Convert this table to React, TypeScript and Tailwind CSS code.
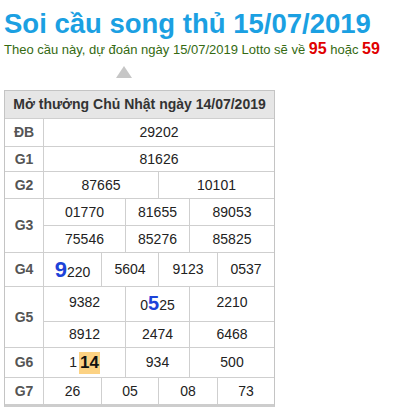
import React from "react";

const F = { fontFamily: '"Liberation Sans", Arial, sans-serif' };

function Label({ children, h }: { children: React.ReactNode; h: string }) {
  return (
    <div className={`w-[39px] shrink-0 border-r border-[#cfcfcf] flex items-center justify-center font-bold text-[14px] text-[#555] ${h}`}>
      {children}
    </div>
  );
}

function Cells({ cols, vals, h, top }: { cols: string; vals: React.ReactNode[]; h: string; top?: boolean }) {
  return (
    <div className={`grid ${cols} ${h} ${top ? "border-t border-[#cfcfcf]" : ""}`}>
      {vals.map((v, i) => (
        <div
          key={i}
          className={`flex items-center justify-center text-[14px] text-[#222] ${i > 0 ? "border-l border-[#cfcfcf]" : ""}`}
        >
          {v}
        </div>
      ))}
    </div>
  );
}

const C1 = "grid-cols-[1fr]";
const C2 = "grid-cols-[114px_1fr]";
const C3 = "grid-cols-[81px_64px_1fr]";
const C4 = "grid-cols-[57px_57px_59px_1fr]";

export default function App() {
  return (
    <div className="w-[400px] h-[408px] bg-white overflow-hidden" style={F}>
      <div className="pl-[4px] pt-[7px]">
        <h1 className="text-[27.5px] leading-[34px] font-bold text-[#1ba0e2]">Soi cầu song thủ 15/07/2019</h1>
        <p className="text-[13px] leading-[18px] text-[#356a12] mt-[0px]">
          Theo cầu này, dự đoán ngày 15/07/2019 Lotto sẽ về{" "}
          <span className="text-[16px] leading-none font-bold text-[#e00000]">95</span> hoặc{" "}
          <span className="text-[16px] leading-none font-bold text-[#e00000]">59</span>
        </p>
        <div className="ml-[112px] mt-[7px] w-0 h-0 border-l-[8px] border-r-[8px] border-b-[12px] border-l-transparent border-r-transparent border-b-[#c6c6c6]" />
        <div className="mt-[12px] w-[271px] border border-[#c4c4c4] border-b-[3px] border-b-[#cdcdcd]">
          <div className="h-[27px] bg-[#e6e6e6] flex items-center justify-center font-bold text-[14px] text-[#333]">
            Mở thưởng Chủ Nhật ngày 14/07/2019
          </div>
          <div className="flex border-t border-[#cfcfcf]">
            <Label h="h-[27px]">ĐB</Label>
            <div className="flex-1"><Cells cols={C1} vals={["29202"]} h="h-[27px]" /></div>
          </div>
          <div className="flex border-t border-[#cfcfcf]">
            <Label h="h-[24px]">G1</Label>
            <div className="flex-1"><Cells cols={C1} vals={["81626"]} h="h-[24px]" /></div>
          </div>
          <div className="flex border-t border-[#cfcfcf]">
            <Label h="h-[26px]">G2</Label>
            <div className="flex-1"><Cells cols={C2} vals={["87665", "10101"]} h="h-[26px]" /></div>
          </div>
          <div className="flex border-t border-[#cfcfcf]">
            <Label h="h-[53px]">G3</Label>
            <div className="flex-1">
              <Cells cols={C3} vals={["01770", "81655", "89053"]} h="h-[26px]" />
              <Cells cols={C3} vals={["75546", "85276", "85825"]} h="h-[27px]" top />
            </div>
          </div>
          <div className="flex border-t border-[#cfcfcf]">
            <Label h="h-[33px]">G4</Label>
            <div className="flex-1">
              <Cells
                cols={C4}
                vals={[
                  <span className="flex items-baseline">
                    <span className="text-[22px] font-bold text-[#1d43d8]">9</span>
                    <span>220</span>
                  </span>,
                  "5604",
                  "9123",
                  "0537",
                ]}
                h="h-[33px]"
              />
            </div>
          </div>
          <div className="flex border-t border-[#cfcfcf]">
            <Label h="h-[60px]">G5</Label>
            <div className="flex-1">
              <Cells
                cols={C3}
                vals={[
                  <span className="self-start mt-[5px]">9382</span>,
                  <span className="flex items-baseline self-start mt-[1px]">
                    <span>0</span>
                    <span className="text-[20px] font-bold text-[#1d43d8]">5</span>
                    <span>25</span>
                  </span>,
                  <span className="self-start mt-[5px]">2210</span>,
                ]}
                h="h-[34px]"
              />
              <Cells cols={C3} vals={["8912", "2474", "6468"]} h="h-[26px]" top />
            </div>
          </div>
          <div className="flex border-t border-[#cfcfcf]">
            <Label h="h-[29px]">G6</Label>
            <div className="flex-1">
              <Cells
                cols={C3}
                vals={[
                  <span className="flex items-center">
                    <span className="mr-[2px]">1</span>
                    <span className="bg-[#fcd283] px-[1px] h-[22px] flex items-center text-[17px] font-bold text-[#111]">14</span>
                  </span>,
                  "934",
                  "500",
                ]}
                h="h-[29px]"
              />
            </div>
          </div>
          <div className="flex border-t border-[#cfcfcf]">
            <Label h="h-[26px]">G7</Label>
            <div className="flex-1"><Cells cols={C4} vals={["26", "05", "08", "73"]} h="h-[26px]" /></div>
          </div>
        </div>
      </div>
    </div>
  );
}
